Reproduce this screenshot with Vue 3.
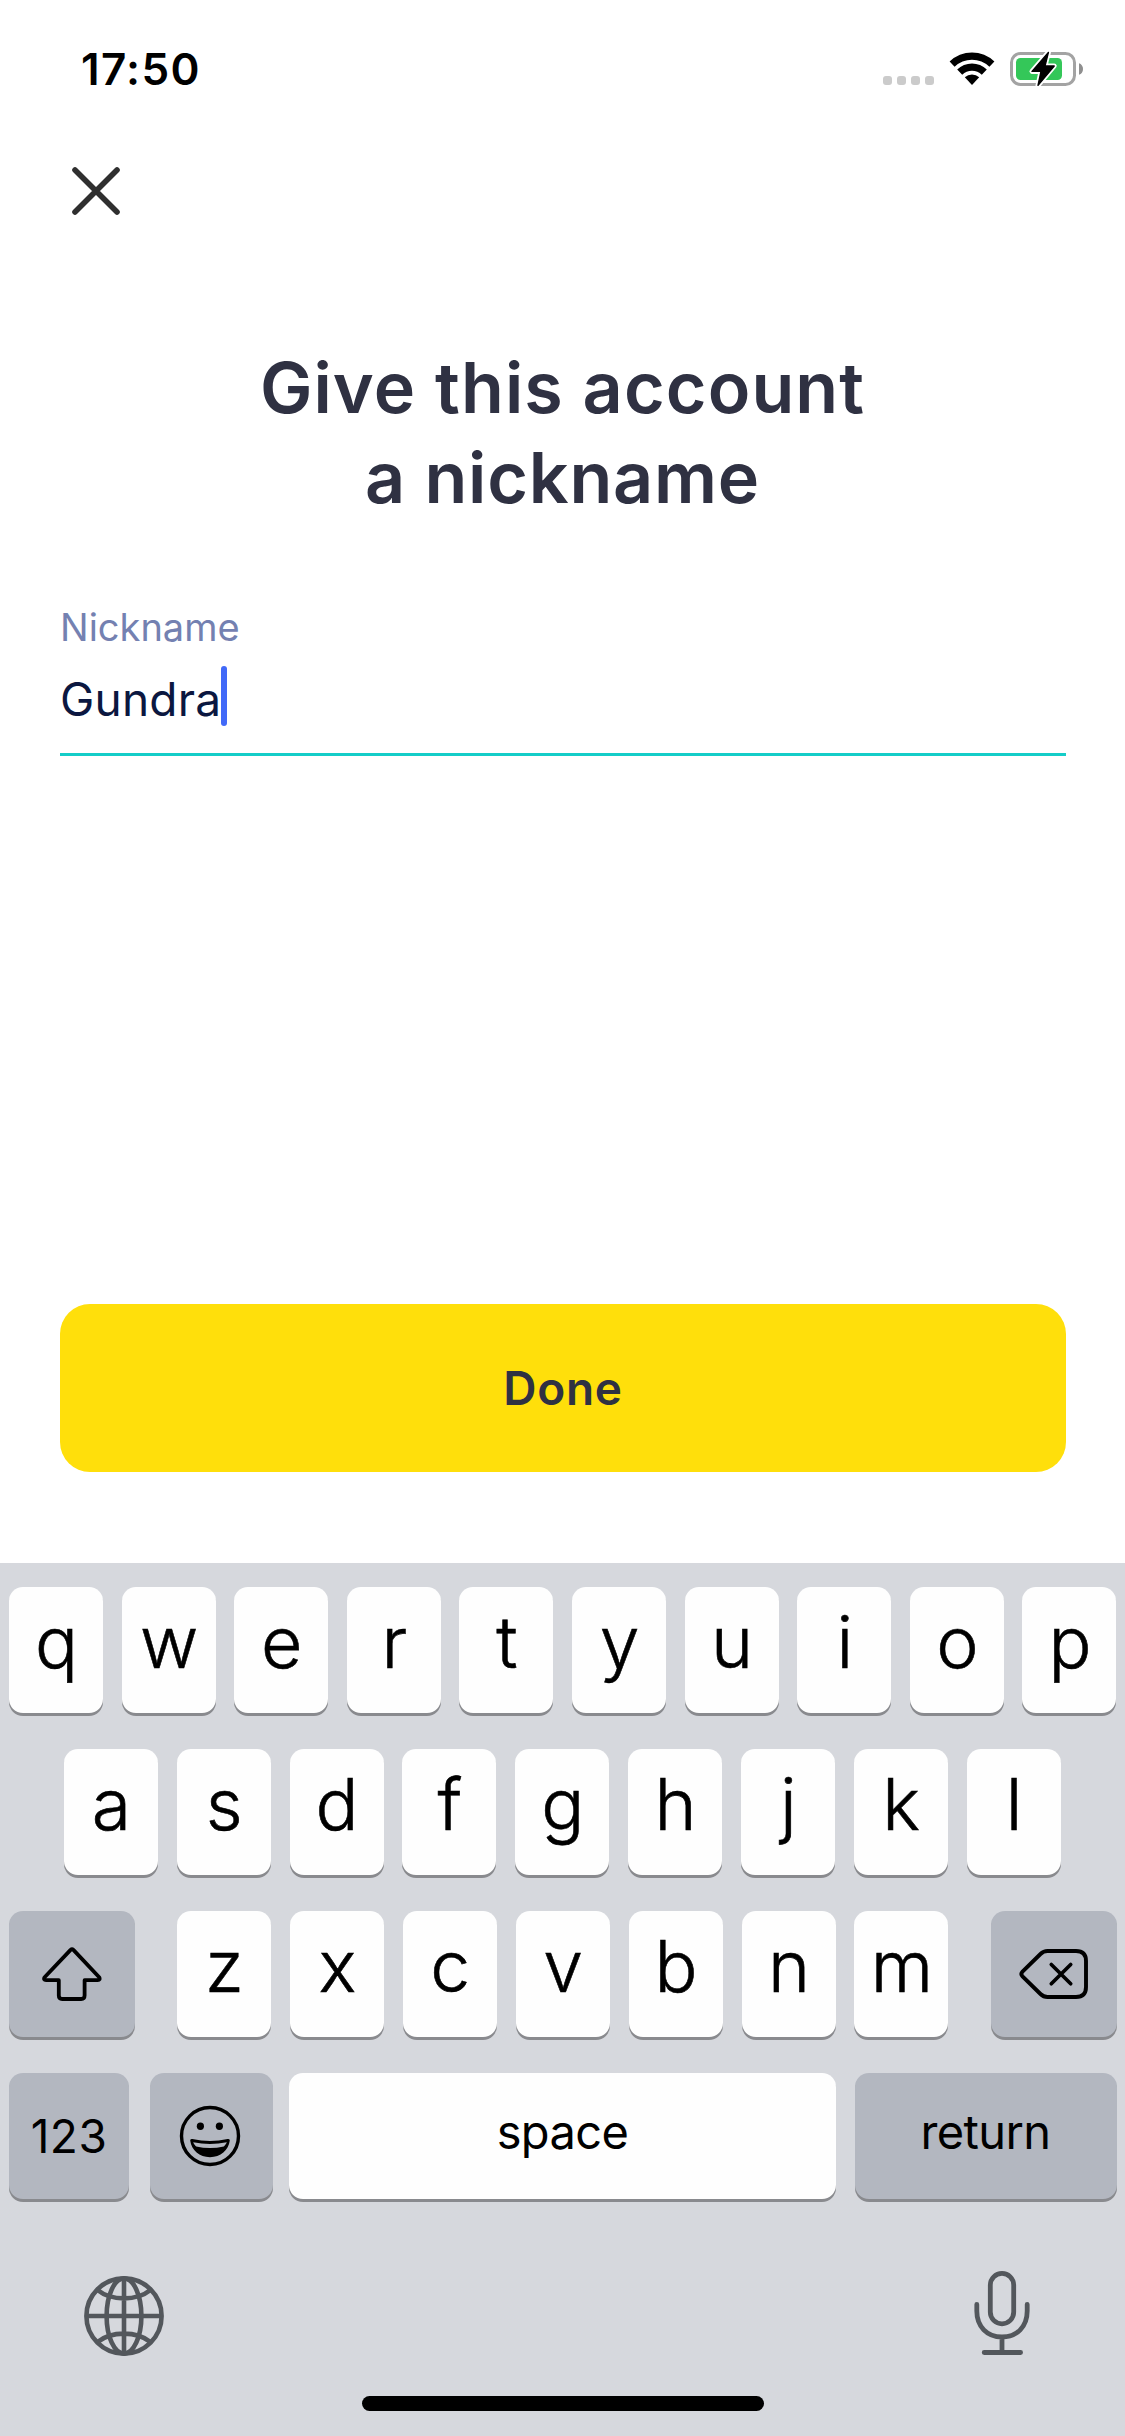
<script setup>
import { ref } from 'vue'

const nickname = ref('Gundra')
const rowOne = [...'qwertyuiop']
const rowTwo = [...'asdfghjkl']
const rowThree = [...'zxcvbnm']
</script>

<template>
  <div class="screen">
    <header class="status">
      <span class="time">17:50</span>
      <div class="indicators">
        <div class="dots"><i></i><i></i><i></i><i></i></div>
        <svg class="wifi" width="46" height="34" viewBox="0 0 46 34">
          <path d="M0.6 9.6 A32 32 0 0 1 45.4 9.6 L40.4 14.8 A24.8 24.8 0 0 0 5.6 14.8 Z" />
          <path d="M8.2 17.5 A21 21 0 0 1 37.8 17.5 L32.8 22.7 A14 14 0 0 0 13.2 22.7 Z" />
          <path d="M15.8 25.3 A10.5 10.5 0 0 1 30.2 25.3 L23 33 Z" />
        </svg>
        <svg class="battery" width="74" height="40" viewBox="0 0 74 40">
          <rect x="1.5" y="4.5" width="63" height="31" rx="9" fill="none" stroke="#a3a3a3" stroke-width="3" />
          <path d="M69 14.2 C71.5 15 73 17.2 73 20 C73 22.8 71.5 25 69 25.8 Z" fill="#8f8f8f" />
          <rect x="6" y="9" width="46" height="22" rx="4.5" fill="#34c759" />
          <path
            d="M38.4 3.4 L22 22.4 H31 L28 36.4 L44.2 17 H35 Z"
            fill="#000" stroke="#fff" stroke-width="5" stroke-linejoin="round" paint-order="stroke"
          />
          <path
            d="M38.4 3.4 L22 22.4 H31 L28 36.4 L44.2 17 H35 Z"
            fill="#000" stroke="#000" stroke-width="1.4" stroke-linejoin="round"
          />
        </svg>
      </div>
    </header>

    <button class="close" aria-label="Close">
      <svg width="48" height="48" viewBox="0 0 48 48">
        <path d="M3 3 L45 45 M45 3 L3 45" fill="none" stroke="#2f2f2f" stroke-width="5.6" stroke-linecap="round" />
      </svg>
    </button>

    <h1 class="title"><span class="line1">Give this account</span><br /><span class="line2">a nickname</span></h1>

    <div class="field">
      <div class="label">Nickname</div>
      <div class="value"><span class="typed">{{ nickname }}</span><span class="caret"></span></div>
    </div>

    <button class="done">Done</button>

    <section class="keyboard">
      <div class="row">
        <div v-for="k in rowOne" :key="k" class="key letter">{{ k }}</div>
      </div>
      <div class="row middle">
        <div v-for="k in rowTwo" :key="k" class="key letter">{{ k }}</div>
      </div>
      <div class="row">
        <div class="key dark wide">
          <svg width="60" height="54" viewBox="0 0 60 54">
            <path
              d="M28.6 2.9 Q30 1.6 31.4 2.9 L57.2 30.2 Q58.6 33 55.6 33.2 H42.6 V48.6 Q42.6 52 39.2 52 H20.2 Q16.8 52 16.8 48.6 V33.2 H4.2 Q1 33 2.6 30.2 Z"
              fill="none" stroke="#000" stroke-width="3.8" stroke-linejoin="round"
            />
          </svg>
        </div>
        <div class="letters">
          <div v-for="k in rowThree" :key="k" class="key letter">{{ k }}</div>
        </div>
        <div class="key dark wide">
          <svg width="70" height="50" viewBox="0 0 70 50">
            <path
              d="M28.5 2 H57 Q67 2 67 12 V38 Q67 48 57 48 H28.5 Q24.5 48 21.5 45 L3.5 27.4 Q1.2 25 3.5 22.6 L21.5 5 Q24.5 2 28.5 2 Z"
              fill="none" stroke="#000" stroke-width="3.9"
            />
            <path d="M32.3 15.5 L51.7 34.8 M51.7 15.5 L32.3 34.8" fill="none" stroke="#000" stroke-width="3.7" stroke-linecap="round" />
          </svg>
        </div>
      </div>
      <div class="row bottom">
        <div class="key dark num">123</div>
        <div class="key dark emoji">
          <svg width="62" height="62" viewBox="0 0 62 62">
            <circle cx="31" cy="31" r="28.5" fill="none" stroke="#000" stroke-width="3.4" />
            <ellipse cx="21.4" cy="21.2" rx="3.6" ry="3.7" />
            <ellipse cx="40.4" cy="21.2" rx="3.6" ry="3.7" />
            <path d="M11.2 35.6 Q11 33.6 13.4 34.1 Q31 38 48.6 34.1 Q51 33.6 50.8 35.6 C49.5 45.5 41.5 52.2 31 52.2 C20.5 52.2 12.5 45.5 11.2 35.6 Z" />
            <path d="M14.2 37.2 Q31 40.6 47.8 37.2 C46.9 39.4 45.8 40.6 44.8 41.4 Q31 44.4 17.2 41.4 C16.2 40.6 15 39.4 14.2 37.2 Z" fill="#b3b7c0" />
          </svg>
        </div>
        <div class="key word space">space</div>
        <div class="key dark word return">return</div>
      </div>

      <div class="tools">
        <svg width="80" height="80" viewBox="0 0 80 80" fill="none" stroke="#53575c" stroke-width="4.6">
          <circle cx="40" cy="40" r="37.6" />
          <ellipse cx="40" cy="40" rx="17.4" ry="37.6" />
          <path d="M40 2 V78 M2 40 H78 M13.5 14 Q24 22.4 40 22.4 Q56 22.4 66.5 14 M13.5 66 Q24 57.6 40 57.6 Q56 57.6 66.5 66" />
        </svg>
        <svg width="56" height="86" viewBox="0 0 56 86" fill="none" stroke="#53575c" stroke-width="4.8" stroke-linecap="round">
          <rect x="16.3" y="3.4" width="23.4" height="50.4" rx="11.7" />
          <path d="M2.8 34.5 V41 C2.8 56.5 13 67 28 67 C43 67 53.2 56.5 53.2 41 V34.5 M28 67 V82.5 M10.2 82.5 H46.6" />
        </svg>
      </div>
      <div class="home"></div>
    </section>
  </div>
</template>

<style>
body {
  background: #fff;
}
</style>

<style scoped>
.screen {
  box-sizing: border-box;
  width: 1125px;
  height: 2436px;
  display: flex;
  flex-direction: column;
  background: #fff;
  font-family: Inter, "Liberation Sans", sans-serif;
  overflow: hidden;
}
button {
  border: 0;
  padding: 0;
  background: none;
}
.status {
  height: 137px;
  box-sizing: border-box;
  padding: 42px 41px 0 81px;
  display: flex;
  justify-content: space-between;
  align-items: flex-start;
}
.time {
  font-size: 44px;
  font-weight: 600;
  line-height: 54px;
  letter-spacing: 1.3px;
  color: #000;
}
.indicators {
  display: flex;
  align-items: flex-end;
  height: 44px;
}
.dots {
  display: flex;
  gap: 5px;
  margin-right: 15px;
  padding-bottom: 1px;
}
.dots i {
  width: 9px;
  height: 9px;
  border-radius: 3px;
  background: #cbcbcb;
}
.wifi {
  margin-right: 15px;
}
.battery {
  margin-bottom: -3px;
}
.close {
  width: 48px;
  height: 48px;
  margin: 30px 0 0 72px;
}
.close svg,
.key svg {
  display: block;
}
.title {
  margin: 128px 0 0;
  text-align: center;
  font: 600 70px/90px Inter, sans-serif;
  color: #2f3142;
}
.line1 {
  letter-spacing: 1.1px;
}
.line2 {
  letter-spacing: 0.8px;
}
.field {
  margin: 82px 59px 0 60px;
  height: 151px;
  border-bottom: 3px solid #14cdc8;
  box-sizing: border-box;
}
.label {
  font-size: 38px;
  line-height: 45px;
  color: #7481b1;
}
.value {
  margin-top: 16px;
  display: flex;
  height: 60px;
}
.typed {
  font-size: 46px;
  line-height: 67px;
  letter-spacing: 0.2px;
  color: #0b1740;
}
.caret {
  width: 6px;
  height: 60px;
  border-radius: 3px;
  background: #4169f8;
}
.done {
  margin: 548px 59px 0 60px;
  height: 168px;
  flex: none;
  border-radius: 30px;
  background: #ffdf0b;
  font: 600 46px/54px Inter, sans-serif;
  letter-spacing: 0.7px;
  color: #2f3142;
}
.keyboard {
  margin-top: auto;
  height: 873px;
  flex: none;
  box-sizing: border-box;
  padding: 24px 8.5px 0 9px;
  background: #d6d8dd;
  display: flex;
  flex-direction: column;
}
.row {
  display: flex;
  justify-content: space-between;
  margin-bottom: 36px;
}
.middle {
  padding: 0 56px 0 55px;
}
.key {
  box-sizing: border-box;
  width: 94px;
  height: 126px;
  display: flex;
  align-items: center;
  justify-content: center;
  border-radius: 14px;
  background: #fefefe;
  box-shadow: 0 3px 0 #898a8e;
  color: #000;
}
.letter {
  padding-bottom: 17px;
  font-size: 71.5px;
  font-weight: 300;
  letter-spacing: -1px;
  -webkit-text-stroke: 0.6px #000;
}
.letters {
  width: 771.5px;
  display: flex;
  justify-content: space-between;
}
.dark {
  background: #b3b7c0;
}
.wide {
  width: 126px;
}
.num {
  width: 120px;
  font-size: 46px;
  letter-spacing: 0.5px;
}
.emoji {
  width: 123px;
  margin-left: 20px;
  padding-right: 2px;
}
.word {
  font-size: 47px;
  letter-spacing: -0.6px;
  padding-bottom: 9px;
}
.space {
  width: 547px;
  margin-left: 16px;
}
.return {
  width: 262px;
  margin-left: 18px;
}
.tools {
  display: flex;
  justify-content: space-between;
  align-items: flex-start;
  margin: 35px 87px 0 75px;
  height: 126px;
}
.tools svg:first-child {
  margin-top: 6px;
}
.home {
  align-self: center;
  width: 402px;
  height: 15px;
  margin-left: 1px;
  border-radius: 8px;
  background: #000;
}
</style>
